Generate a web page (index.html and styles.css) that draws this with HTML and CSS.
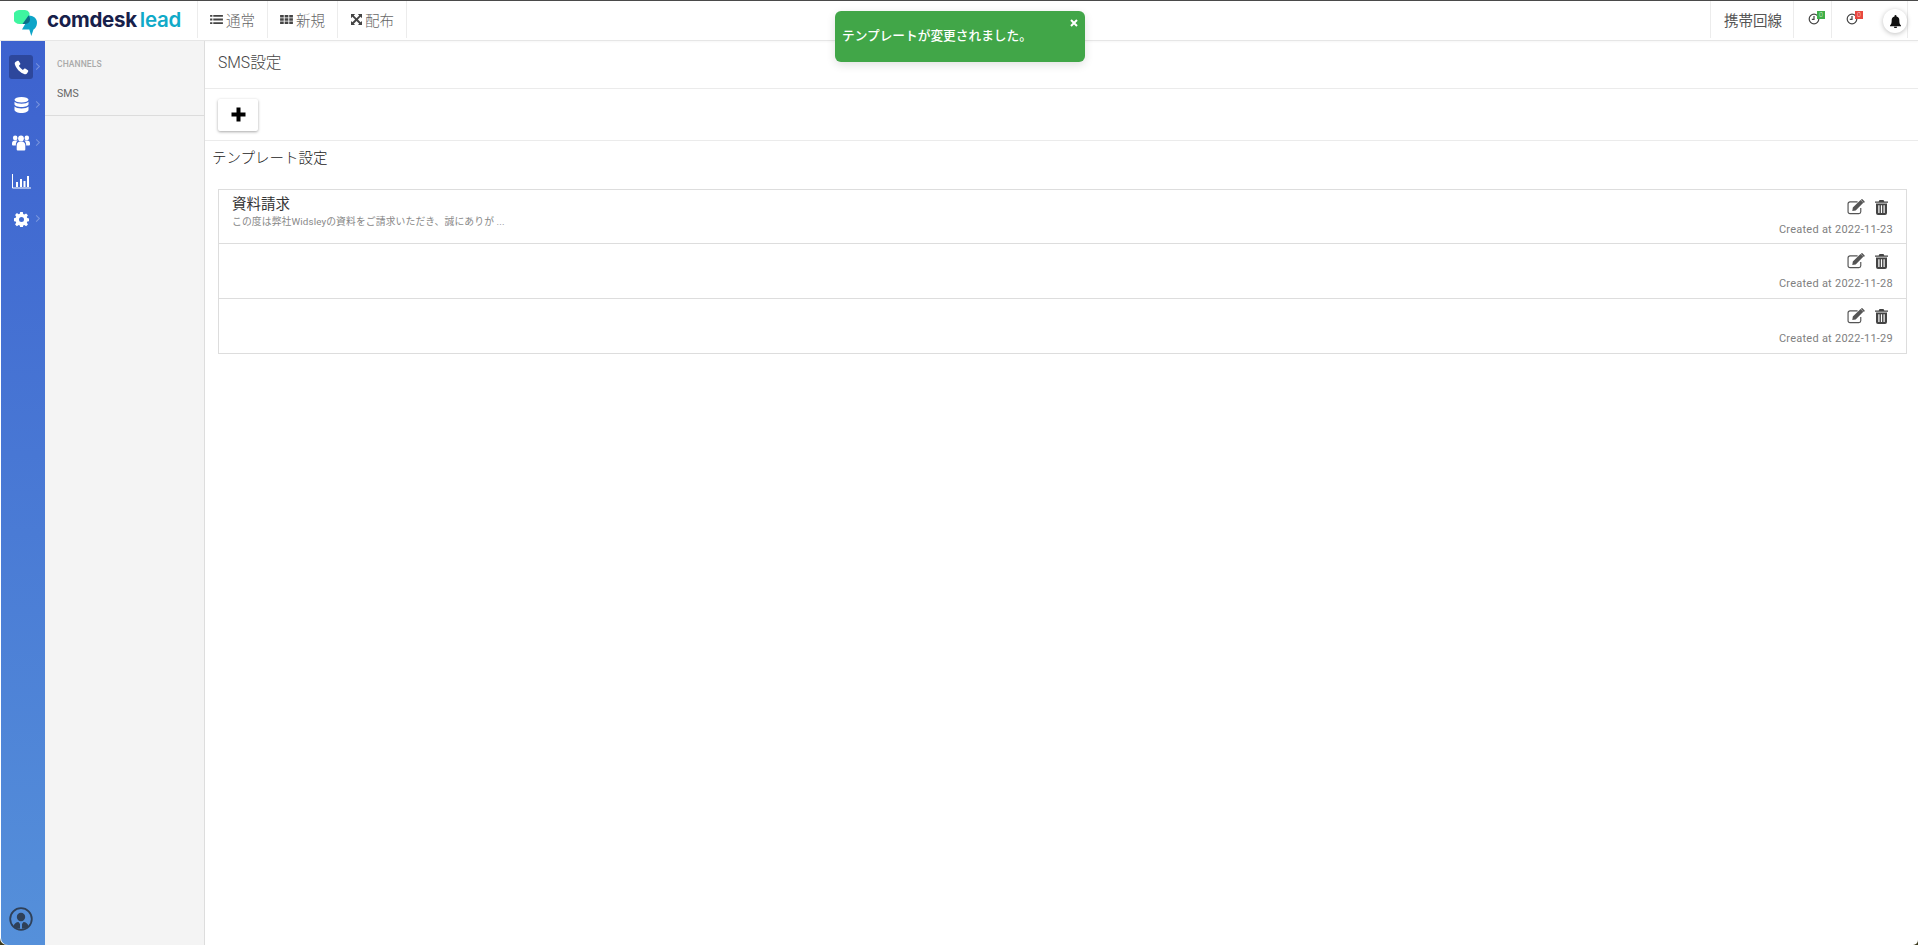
FILE: index.html
```html
<!DOCTYPE html>
<html lang="ja">
<head>
<meta charset="utf-8">
<title>SMS設定</title>
<link rel="stylesheet" href="styles.css">
</head>
<body>
<div class="app">
  <header class="topbar">
    <div class="brand">
      <svg class="logo" width="24" height="27" viewBox="0 0 24 27">
        <path d="M5 0h6a5.500 5.500 0 0 1 4.500 3L15.500 14H6.500A7 7 0 0 1 5 0z" fill="#3ef5a0"/>
        <path d="M14.500 5.500c5 0 8.800 3 8.500 7.500-.2 3-1.500 5.500-3.500 6.500L17.300 26l-2-6.500H8L12 12.500z" fill="#0ea5c8"/>
        <path d="M14.500 5.500c.8 1 1.500 2.500 1.500 3.800 0 2.700-1.800 4.700-4.500 4.700H8.500z" fill="#0b6c86"/>
      </svg>
      <span class="brand-text">comdesk</span><span class="brand-lead">lead</span>
    </div>
    <nav class="tabs">
      <a class="tab"><svg class="tab-icon" viewBox="0 0 14 12"><path d="M0 1h2.500v2H0zM3.500 1H14v2H3.500zM0 5h2.500v2H0zM3.500 5H14v2H3.500zM0 9h2.500v2H0zM3.500 9H14v2H3.500z"/></svg>通常</a>
      <a class="tab"><svg class="tab-icon" viewBox="0 0 14 12"><path d="M0 1h4v2.800H0zM5 1h4v2.800H5zM10 1h4v2.800h-4zM0 4.600h4v2.800H0zM5 4.600h4v2.800H5zM10 4.600h4v2.800h-4zM0 8.200h4V11H0zM5 8.200h4V11H5zM10 8.200h4V11h-4z"/></svg>新規</a>
      <a class="tab tab-last"><svg class="tab-icon" viewBox="0 0 12 12"><path d="M0 0h4.500L3 1.500 6 4.500l3-3L7.500 0H12v4.500L10.500 3l-3 3 3 3L12 7.500V12H7.500L9 10.500l-3-3-3 3L4.500 12H0V7.500L1.500 9l3-3-3-3L0 4.500z"/></svg>配布</a>
    </nav>
    <div class="top-right">
      <a class="tab mobile">携帯回線</a>
      <a class="tab status"><svg class="clock" viewBox="0 0 12 12"><circle cx="6" cy="6" r="4.800"/><path d="M6 3v3.300H3.800"/></svg><span class="flag green">0</span></a>
      <a class="tab status plain"><svg class="clock" viewBox="0 0 12 12"><circle cx="6" cy="6" r="4.800"/><path d="M6 3v3.300H3.800"/></svg><span class="flag red">0</span></a>
      <div class="bell-cell">
        <span class="bell"><svg width="11" height="13" viewBox="0 0 11 13"><path d="M5.500 0a1 1 0 0 1 1 1v.4A3.600 3.600 0 0 1 9.300 5c0 3 .4 4.200 1.700 5.500v.7H0v-.7C1.300 9.200 1.700 8 1.700 5a3.600 3.600 0 0 1 2.800-3.600V1a1 1 0 0 1 1-1zM4 11.800h3a1.500 1.500 0 0 1-3 0z" fill="#111"/></svg></span>
      </div>
    </div>
  </header>

  <div class="body">
    <aside class="rail">
      <a class="rail-item active"><svg width="15" height="15" viewBox="0 0 16 16"><path d="M3.800.8 1.900 1.900C1 2.400.6 3.500.9 4.500c1.600 5 5.500 9 10.500 10.600 1 .3 2.100-.1 2.600-1l1.100-1.900c.3-.5.100-1-.3-1.300l-2.800-1.800c-.4-.2-.9-.1-1.200.2l-1.300 1.300C7.700 9.600 6.100 8 5.200 6.200l1.300-1.300c.3-.3.4-.8.200-1.200L5 1.100C4.700.7 4.200.6 3.800.8z" fill="#fff"/></svg><span class="chev"></span></a>
      <a class="rail-item"><svg width="15" height="17" viewBox="0 0 15 17"><ellipse cx="7.500" cy="2.800" rx="7" ry="2.800" fill="#fff"/><path d="M.5 4.800c1 1.300 3.700 2 7 2s6-.7 7-2v2.500c0 1.500-3 2.700-7 2.700s-7-1.200-7-2.700zM.5 9.400c1 1.300 3.700 2 7 2s6-.7 7-2v3.400c0 1.900-3 3.200-7 3.200s-7-1.300-7-3.200z" fill="#fff"/></svg><span class="chev"></span></a>
      <a class="rail-item"><svg width="18" height="16" viewBox="0 0 18 16"><g fill="#fff"><circle cx="9" cy="3.400" r="2.900"/><circle cx="3.200" cy="2.900" r="2.300"/><circle cx="14.800" cy="2.900" r="2.300"/><path d="M4.700 10a4 4 0 0 1 3.800-3.500h1A4 4 0 0 1 13.300 10v4.500a1 1 0 0 1-1 1H5.700a1 1 0 0 1-1-1z"/><path d="M0 8.500a3 3 0 0 1 3-3h2.800C4.500 6.500 3.800 8 3.800 10.500H1a1 1 0 0 1-1-1zM18 8.500a3 3 0 0 0-3-3h-2.800c1.300 1 2 2.500 2 5H17a1 1 0 0 0 1-1z"/></g></svg><span class="chev"></span></a>
      <a class="rail-item"><svg width="19" height="15" viewBox="0 0 19 15"><path d="M.5 0v14H19" fill="none" stroke="#fff"/><path d="M4 8h2v5H4zM8 5h2v8H8zM11.500 7h2v6h-2zM15 2h2v11h-2z" fill="#fff"/></svg></a>
      <a class="rail-item"><svg width="15" height="15" viewBox="0 0 15 15"><path fill="#fff" fill-rule="evenodd" d="M6.200 0h2.600l.4 2 1.100.5 1.800-1.100 1.800 1.800-1.100 1.800.5 1.100 2 .4v2.600l-2 .4-.5 1.100 1.100 1.800-1.800 1.800-1.800-1.100-1.100.5-.4 2H6.200l-.4-2-1.100-.5-1.800 1.100-1.800-1.800 1.100-1.800-.5-1.100-2-.4V6.200l2-.4.5-1.100-1.100-1.800 1.800-1.800 1.800 1.100 1.100-.5zM7.500 5a2.500 2.500 0 1 0 0 5 2.500 2.500 0 0 0 0-5z"/></svg><span class="chev"></span></a>
      <div class="rail-spacer"></div>
      <a class="avatar"><svg width="24" height="24" viewBox="0 0 24 24"><circle cx="12" cy="12" r="10.800" fill="none" stroke="#2f4058" stroke-width="1.800"/><circle cx="12" cy="10" r="4.200" fill="#2f4058"/><path d="M4.500 19.500c.5-3 2.700-4.500 5-4.500l1.500 2v4.500a10 10 0 0 1-6.500-2zM19.500 19.500c-.5-3-2.700-4.500-5-4.500L13 17v4.500a10 10 0 0 0 6.500-2z" fill="#2f4058"/></svg></a>
    </aside>

    <aside class="channels">
      <div class="channels-head">
        <div class="channels-title">CHANNELS</div>
        <div class="channels-link">SMS</div>
      </div>
    </aside>

    <main class="main">
      <h1 class="page-title">SMS設定</h1>
      <div class="toolbar">
        <button class="add-btn" aria-label="追加"><svg width="15" height="15" viewBox="0 0 15 15"><path d="M5.500.5h4v5h5v4h-5v5h-4v-5h-5v-4h5z" fill="#000"/></svg></button>
      </div>
      <h2 class="section-title">テンプレート設定</h2>
      <ul class="list">
        <li class="row">
          <div class="row-text">
            <div class="row-title">資料請求</div>
            <div class="row-body">この度は弊社Widsleyの資料をご請求いただき、誠にありが ...</div>
          </div>
          <div class="row-meta">
            <div class="row-actions">
              <svg class="edit" viewBox="0 0 17 15"><path d="M13 8.500V12a1.800 1.800 0 0 1-1.800 1.800H2.800A1.800 1.800 0 0 1 1 12V4.500a1.800 1.800 0 0 1 1.800-1.800H10" fill="none" stroke="#555" stroke-width="1.100"/><path d="M5.500 8 12.800.8l2.600 2.600-7.200 7.300-3.200.6zM13.500.2l.8-.2 2.400 2.400-.1.700-.6.600-2.700-2.700z" fill="#555"/></svg>
              <svg class="trash" viewBox="0 0 13 15"><path fill="#444" fill-rule="evenodd" d="M4.500 0h4l.8 1.500H13v1.300H0V1.500h3.700zM1 3.500h11V13a2 2 0 0 1-2 2H3a2 2 0 0 1-2-2zm2.300 1.700v7.800h1.200V5.200zm2.600 0v7.800h1.200V5.200zm2.600 0v7.800h1.200V5.200z"/></svg>
            </div>
            <div class="row-date">Created at 2022-11-23</div>
          </div>
        </li>
        <li class="row">
          <div class="row-text"></div>
          <div class="row-meta">
            <div class="row-actions">
              <svg class="edit" viewBox="0 0 17 15"><path d="M13 8.500V12a1.800 1.800 0 0 1-1.800 1.800H2.800A1.800 1.800 0 0 1 1 12V4.500a1.800 1.800 0 0 1 1.800-1.800H10" fill="none" stroke="#555" stroke-width="1.100"/><path d="M5.500 8 12.800.8l2.600 2.600-7.200 7.300-3.200.6zM13.500.2l.8-.2 2.400 2.400-.1.700-.6.600-2.700-2.700z" fill="#555"/></svg>
              <svg class="trash" viewBox="0 0 13 15"><path fill="#444" fill-rule="evenodd" d="M4.500 0h4l.8 1.500H13v1.300H0V1.500h3.700zM1 3.500h11V13a2 2 0 0 1-2 2H3a2 2 0 0 1-2-2zm2.300 1.700v7.800h1.200V5.200zm2.600 0v7.800h1.200V5.200zm2.600 0v7.800h1.200V5.200z"/></svg>
            </div>
            <div class="row-date">Created at 2022-11-28</div>
          </div>
        </li>
        <li class="row">
          <div class="row-text"></div>
          <div class="row-meta">
            <div class="row-actions">
              <svg class="edit" viewBox="0 0 17 15"><path d="M13 8.500V12a1.800 1.800 0 0 1-1.800 1.800H2.800A1.800 1.800 0 0 1 1 12V4.500a1.800 1.800 0 0 1 1.800-1.800H10" fill="none" stroke="#555" stroke-width="1.100"/><path d="M5.500 8 12.800.8l2.600 2.600-7.200 7.300-3.200.6zM13.500.2l.8-.2 2.400 2.400-.1.700-.6.600-2.700-2.700z" fill="#555"/></svg>
              <svg class="trash" viewBox="0 0 13 15"><path fill="#444" fill-rule="evenodd" d="M4.500 0h4l.8 1.500H13v1.300H0V1.500h3.700zM1 3.500h11V13a2 2 0 0 1-2 2H3a2 2 0 0 1-2-2zm2.300 1.700v7.800h1.200V5.200zm2.600 0v7.800h1.200V5.200zm2.600 0v7.800h1.200V5.200z"/></svg>
            </div>
            <div class="row-date">Created at 2022-11-29</div>
          </div>
        </li>
      </ul>
    </main>
  </div>

  <div class="toast">
    <span class="toast-text">テンプレートが変更されました。</span>
    <svg class="toast-close" width="8" height="8" viewBox="0 0 8 8"><path d="M1 1l6 6M7 1 1 7" stroke="#fff" stroke-width="2"/></svg>
  </div>
</div>
</body>
</html>
```

FILE: styles.css
```css
* { box-sizing: border-box; }
html, body { margin: 0; height: 100%; overflow: hidden; background: #3b3a1c; }
body { font-family: Roboto, "Noto Sans CJK JP", sans-serif; color: #444; }
.app { height: 945px; display: flex; flex-direction: column; position: relative; border-top: 1px solid #4a4a4a; background: #fff; border-radius: 0 0 5px 7px; }

.topbar { height: 40px; flex: none; display: flex; align-items: stretch; background: #fff; border-bottom: 1px solid #e6e6e6; box-shadow: 0 1px 2px rgba(0,0,0,.04); }
.brand { width: 197px; display: flex; align-items: center; padding-left: 14px; flex: none; }
.logo { margin-right: 9px; margin-top: 6px; flex: none; }
.brand-text { font: 700 20.500px/1 "Inter", sans-serif; color: #17204a; letter-spacing: -.3px; }
.brand-lead { font: 600 20.500px/1 "Inter", sans-serif; color: #10aac8; margin-left: 3px; letter-spacing: -.2px; }

.tabs { display: flex; height: 37px; border-left: 1px solid #ececec; }
.tab { display: flex; align-items: center; width: 70px; height: 37px; padding-left: 12px; font-size: 14.500px; font-weight: 300; color: #666; border-right: 1px solid #ececec; white-space: nowrap; }
.tab-last { width: 69px; }
.tab-last .tab-icon { margin-right: 2px; }
.tab-icon { width: 13px; height: 11px; fill: #444; margin-right: 3px; flex: none; }
.top-right { margin-left: auto; margin-right: 10px; display: flex; height: 37px; }
.mobile { width: 84px; border-left: 1px solid #ececec; padding-left: 13px; color: #555; font-weight: 400; }
.status { width: 38px; padding: 0 0 0 14px; position: relative; align-items: flex-start; }
.status.plain { border-right: 0; }
.clock { width: 12px; height: 12px; fill: none; stroke: #444; stroke-width: 1.200; margin-top: 12px; flex: none; }
.flag { position: absolute; left: 23px; top: 10px; width: 8px; height: 8px; font-size: 7px; line-height: 8px; text-align: center; color: #d8f0d8; }
.green { background: #3fae49; }
.red { background: #e8483f; color: #fdd; }
.bell-cell { width: 38px; display: flex; justify-content: flex-end; align-items: flex-start; padding-top: 8px; border-right: 1px solid #ececec; }
.bell { width: 24px; height: 24px; border-radius: 50%; background: #fff; box-shadow: 0 1px 5px rgba(0,0,0,.25); display: flex; align-items: center; justify-content: center; }

.body { flex: 1; display: flex; min-height: 0; }
.rail { width: 44px; margin-left: 1px; flex: none; background: linear-gradient(180deg, #3d62cf 0%, #5590da 100%); display: flex; flex-direction: column; align-items: flex-start; padding: 14px 0 0 8px; border-bottom-left-radius: 7px; }
.rail-item { position: relative; width: 24px; height: 24px; margin-bottom: 14px; display: flex; align-items: center; justify-content: center; border-radius: 3px; flex: none; }
.rail-item.active { background: #2d479c; }
.chev { position: absolute; left: 25px; top: 9px; width: 5px; height: 5px; border-top: 1px solid rgba(255,255,255,.3); border-right: 1px solid rgba(255,255,255,.3); transform: rotate(45deg); }
.rail-spacer { flex: 1; }
.avatar { height: 24px; margin-bottom: 14px; }

.channels { width: 160px; flex: none; background: #f4f4f4; border-right: 1px solid #ddd; }
.channels-head { height: 75px; padding: 17px 12px 0; border-bottom: 1px solid #dcdcdc; }
.channels-title { font-size: 8.500px; font-weight: 500; color: #aaa; line-height: 12px; letter-spacing: .1px; }
.channels-link { font-size: 10.500px; color: #666; margin-top: 17px; line-height: 14px; }

.main { flex: 1; min-width: 0; }
.page-title { margin: 0; height: 48px; padding: 0 13px 7px; display: flex; align-items: center; font-size: 15.700px; font-weight: 300; color: #444; border-bottom: 1px solid #ebebeb; }
.toolbar { height: 52px; padding: 10px 13px; border-bottom: 1px solid #ebebeb; }
.add-btn { width: 40px; height: 32px; border: 0; border-radius: 2px; background: #fff; box-shadow: 0 1px 3px rgba(0,0,0,.35); display: flex; align-items: center; justify-content: center; padding: 0 0 2px; }
.section-title { margin: 0; padding: 8px 0 0 7px; font-size: 14.500px; font-weight: 300; color: #222; line-height: 20px; height: 48px; }
.list { list-style: none; margin: 0 11px 0 13px; padding: 0; border: 1px solid #ddd; border-bottom: 0; }
.row { height: 55px; border-bottom: 1px solid #ddd; display: flex; justify-content: space-between; padding: 0 13px; }
.row:first-child { height: 54px; }
.row-title { font-size: 14.500px; font-weight: 400; color: #333; line-height: 20px; margin-top: 5px; }
.row-body { font-size: 9.800px; color: #888; line-height: 14px; letter-spacing: .12px; }
.row-meta { display: flex; flex-direction: column; align-items: flex-end; }
.row-actions { display: flex; align-items: center; gap: 10px; margin-top: 9px; height: 16px; padding-right: 5px; }
.edit { width: 18px; height: 16px; }
.trash { width: 13px; height: 15px; }
.row-date { font-size: 11px; color: #808080; line-height: 14px; margin-top: 8px; letter-spacing: .25px; }

.toast { position: absolute; left: 835px; top: 10px; width: 250px; height: 51px; background: #41a648; border-radius: 6px; box-shadow: 0 3px 10px rgba(0,0,0,.12); color: #fff; display: flex; align-items: center; padding: 0 0 5px 7px; font-size: 12.700px; font-weight: 500; }
.toast-text { white-space: nowrap; }
.toast-close { position: absolute; right: 7px; top: 8px; }
```
